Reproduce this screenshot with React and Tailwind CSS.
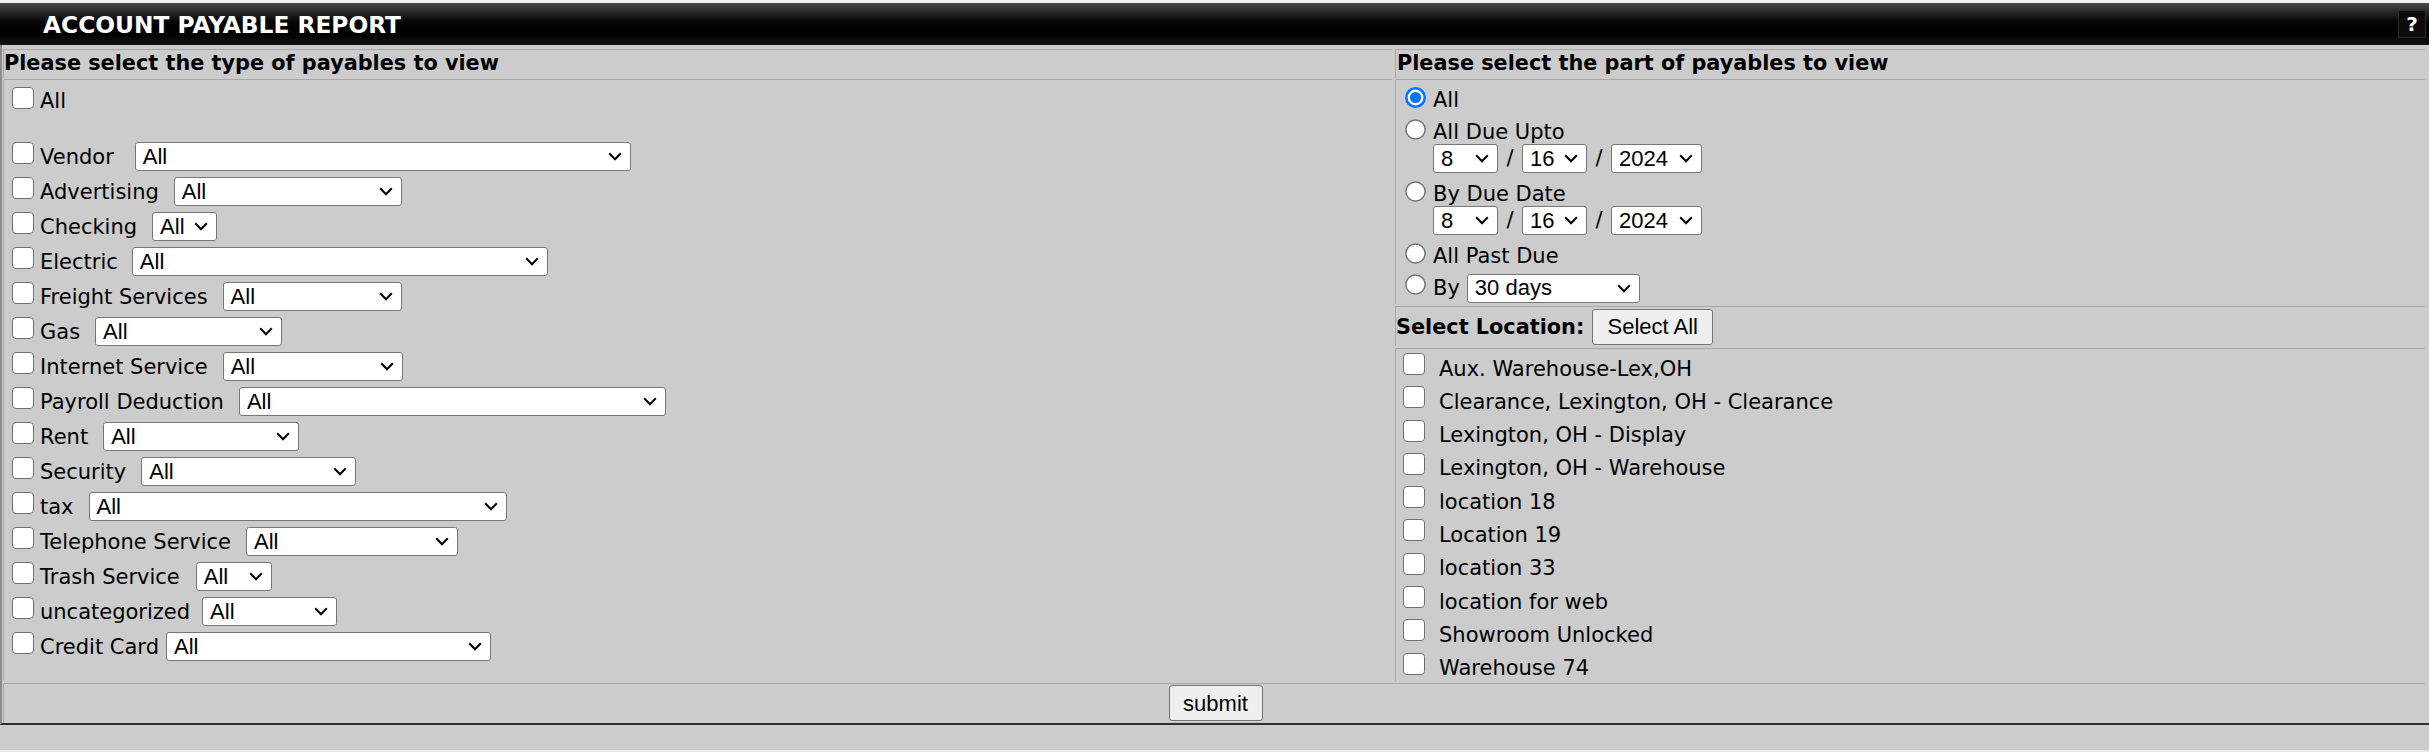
const payableTypes = [
  { label: 'Vendor', w: 'w-[496px]', ml: 'ml-[21px]' },
  { label: 'Advertising', w: 'w-[228px]', ml: 'ml-[15px]' },
  { label: 'Checking', w: 'w-[65px]', ml: 'ml-[15px]' },
  { label: 'Electric', w: 'w-[416px]', ml: 'ml-[14px]' },
  { label: 'Freight Services', w: 'w-[179px]', ml: 'ml-[15px]' },
  { label: 'Gas', w: 'w-[187px]', ml: 'ml-[15px]' },
  { label: 'Internet Service', w: 'w-[180px]', ml: 'ml-[15px]' },
  { label: 'Payroll Deduction', w: 'w-[427px]', ml: 'ml-[15px]' },
  { label: 'Rent', w: 'w-[196px]', ml: 'ml-[15px]' },
  { label: 'Security', w: 'w-[215px]', ml: 'ml-[15px]' },
  { label: 'tax', w: 'w-[418px]', ml: 'ml-[15px]' },
  { label: 'Telephone Service', w: 'w-[212px]', ml: 'ml-[15px]' },
  { label: 'Trash Service', w: 'w-[76px]', ml: 'ml-[16px]' },
  { label: 'uncategorized', w: 'w-[135px]', ml: 'ml-[12px]' },
  { label: 'Credit Card', w: 'w-[325px]', ml: 'ml-[7px]' },
]

const locations = [
  'Aux. Warehouse-Lex,OH',
  'Clearance, Lexington, OH - Clearance',
  'Lexington, OH - Display',
  'Lexington, OH - Warehouse',
  'location 18',
  'Location 19',
  'location 33',
  'location for web',
  'Showroom Unlocked',
  'Warehouse 74',
]

function Checkbox() {
  return <span className="block w-[22px] h-[22px] shrink-0 rounded-[4px] border-[1.5px] border-[#707070] bg-white" />
}

function Radio({ checked }) {
  return (
    <svg width="21" height="21" viewBox="0 0 21 21" className="shrink-0 block">
      {checked ? (
        <>
          <circle cx="10.5" cy="10.5" r="9.2" fill="#fff" stroke="#0075ff" strokeWidth="2.6" />
          <circle cx="10.5" cy="10.5" r="5.6" fill="#0075ff" />
        </>
      ) : (
        <circle cx="10.5" cy="10.5" r="9.6" fill="#fff" stroke="#767676" strokeWidth="1.5" />
      )}
    </svg>
  )
}

function Select({ value, w, className = '' }) {
  return (
    <div
      className={
        'h-[29px] shrink-0 flex items-center justify-between rounded-[3px] border border-[#767676] bg-white pl-[7px] pr-[8px] font-["Liberation_Sans",Arial,sans-serif] text-[22px] leading-none ' +
        w + ' ' + className
      }
    >
      <span>{value}</span>
      <svg width="14" height="9" viewBox="0 0 14 9" className="shrink-0">
        <path d="M1.2 1.3 L7 7.2 L12.8 1.3" fill="none" stroke="#000" strokeWidth="2" />
      </svg>
    </div>
  )
}

function DateSelects() {
  return (
    <div className="flex items-center h-[29px] ml-[28px]">
      <Select value="8" w="w-[65px]" />
      <span className="mx-[8px] w-[8px] text-center">/</span>
      <Select value="16" w="w-[65px]" />
      <span className="mx-[8px] w-[8px] text-center">/</span>
      <Select value="2024" w="w-[91px]" />
    </div>
  )
}

function RadioRow({ label, checked, mt }) {
  return (
    <div className={'flex items-start h-[24px] ' + mt}>
      <div className="-mt-[1px]">
        <Radio checked={checked} />
      </div>
      <span className="ml-[7px] leading-[24px]">{label}</span>
    </div>
  )
}

function Button({ children, className = '' }) {
  return (
    <div
      className={
        'h-[36px] flex items-center justify-center rounded-[3px] border border-[#767676] bg-[#efefef] font-["Liberation_Sans",Arial,sans-serif] text-[22px] ' +
        className
      }
    >
      {children}
    </div>
  )
}

export default function App() {
  return (
    <div className="w-[2429px] h-[752px] overflow-hidden bg-[#cbcccb] font-['DejaVu_Sans',Verdana,sans-serif] text-[21px] text-black">
      <div className="h-[3px] bg-[#f1f1f5]" />
      <div className="h-[42px] flex items-center justify-between bg-[linear-gradient(to_bottom,#4a4a4a_0%,#262626_22%,#060606_45%,#000_75%,#141414_100%)]">
        <span className="ml-[43px] font-bold text-[23.3px] leading-[27px] text-white">ACCOUNT PAYABLE REPORT</span>
        <span className="mr-[3px] mb-[1px] w-[28px] h-[28px] flex items-center justify-center border border-[#2c2c2c] bg-[#0b0b0b] font-bold text-[20px] text-white">?</span>
      </div>

      <div className="h-[680px] border-l-2 border-l-[#8c8c8c] border-b-2 border-b-[#2e2e2e] pl-[1px] pr-[3px] pt-[4px]">
        {/* headers */}
        <div className="flex gap-[3px] h-[29px]">
          <div className="w-[1389px] border-t border-l border-[#a7a8a7] pt-[1px] font-bold text-[20.8px] leading-[24px]">
            Please select the type of payables to view
          </div>
          <div className="w-[1031px] border-t border-l border-[#a7a8a7] pt-[1px] pl-[1px] font-bold text-[20.8px] leading-[24px]">
            Please select the part of payables to view
          </div>
        </div>

        {/* body */}
        <div className="flex gap-[3px] h-[602px] mt-[1px]">
          <div className="w-[1389px] border-t border-l border-[#a7a8a7] pt-[7px] pl-[8px]">
            <div className="flex items-start h-[35px] mb-[20px]">
              <Checkbox />
              <span className="ml-[6px] leading-[29px]">All</span>
            </div>
            {payableTypes.map((p) => (
              <div key={p.label} className="flex items-start h-[35px]">
                <Checkbox />
                <span className="ml-[6px] leading-[30px] whitespace-nowrap">{p.label}</span>
                <Select value="All" w={p.w} className={p.ml} />
              </div>
            ))}
          </div>

          <div className="w-[1031px] flex flex-col gap-[2px]">
            <div className="h-[225px] border-t border-l border-[#a7a8a7] pl-[9px]">
              <RadioRow label="All" checked mt="mt-[8px]" />
              <RadioRow label="All Due Upto" mt="mt-[8px]" />
              <DateSelects />
              <RadioRow label="By Due Date" mt="mt-[9px]" />
              <DateSelects />
              <RadioRow label="All Past Due" mt="mt-[9px]" />
              <div className="flex items-center h-[30px] mt-[5px]">
                <div className="self-start mt-[1px]">
                  <Radio />
                </div>
                <span className="ml-[7px] leading-[24px]">By</span>
                <Select value="30 days" w="w-[173px]" className="ml-[7px]" />
              </div>
            </div>

            <div className="h-[40px] border-t border-l border-[#a7a8a7] flex items-center">
              <span className="font-bold text-[20.8px] leading-[24px]">Select Location:</span>
              <Button className="ml-[8px] w-[121px]">Select All</Button>
            </div>

            <div className="h-[333px] border-t border-l border-[#a7a8a7] pt-[4px] pl-[7px]">
              {locations.map((l) => (
                <div key={l} className="flex items-start h-[33.3px]">
                  <Checkbox />
                  <span className="ml-[14px] mt-[3.5px] leading-[24px] whitespace-nowrap">{l}</span>
                </div>
              ))}
            </div>
          </div>
        </div>

        {/* submit */}
        <div className="h-[40px] mt-[2px] border-t border-l border-[#a7a8a7] flex justify-center pt-[1px]">
          <Button className="w-[94px] ml-[1px]">submit</Button>
        </div>
      </div>
      <div className="h-[25px]" />
      <div className="h-[2px] bg-[#e9e9ef]" />
    </div>
  )
}
